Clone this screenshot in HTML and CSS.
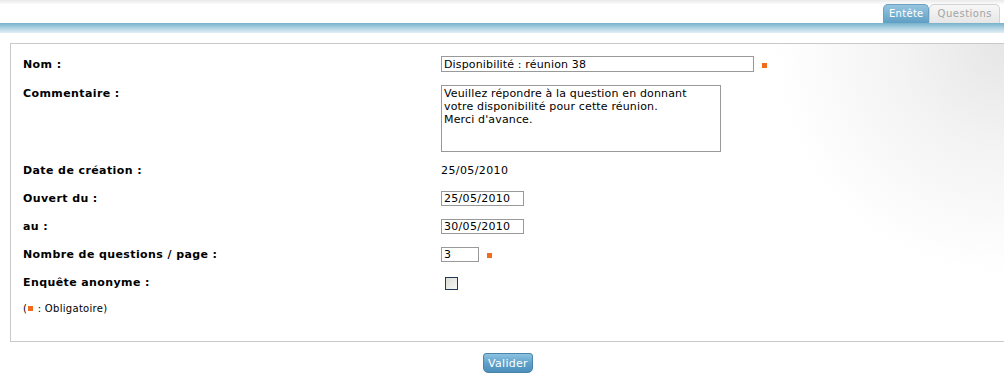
FILE: index.html
```html
<!DOCTYPE html>
<html lang="fr">
<head>
  <meta charset="UTF-8">
  <title>Enquête - Entête</title>
  <link rel="stylesheet" href="styles.css">
</head>
<body>
<div class="top-strip"></div>
<div class="tab-bar">
  <a class="tab active" href="#">Entête</a>
  <a class="tab" href="#">Questions</a>
</div>
<div class="blue-bar"></div>

<div class="page">
  <form class="survey-box">
    <div class="row row-first">
      <label class="lbl">Nom :</label>
      <input class="field field-name" type="text" value="Disponibilité : réunion 38">
      <span class="req"></span>
    </div>
    <div class="row row-top">
      <label class="lbl">Commentaire :</label>
      <textarea class="field field-comment">Veuillez répondre à la question en donnant
votre disponibilité pour cette réunion.
Merci d'avance.</textarea>
    </div>
    <div class="row row-date">
      <label class="lbl">Date de création :</label>
      <span class="value">25/05/2010</span>
    </div>
    <div class="row">
      <label class="lbl">Ouvert du :</label>
      <input class="field field-date" type="text" value="25/05/2010">
    </div>
    <div class="row">
      <label class="lbl">au :</label>
      <input class="field field-date" type="text" value="30/05/2010">
    </div>
    <div class="row">
      <label class="lbl">Nombre de questions / page :</label>
      <input class="field field-num" type="text" value="3">
      <span class="req"></span>
    </div>
    <div class="row">
      <label class="lbl">Enquête anonyme :</label>
      <input class="check" type="checkbox">
    </div>
    <div class="row row-note">
      <span class="note">(<span class="req req-inline"></span> : Obligatoire)</span>
    </div>
  </form>
  <div class="actions">
    <button class="btn" type="button">Valider</button>
  </div>
</div>
</body>
</html>
```

FILE: styles.css
```css
body {
  margin: 0;
  background: #fff;
  color: #000;
  font-family: "DejaVu Sans", Verdana, sans-serif;
  font-size: 11px;
  overflow: hidden;
}
.top-strip {
  height: 4px;
  background: linear-gradient(#e9e9e9, #fbfbfb);
}
.tab-bar {
  height: 19px;
  display: flex;
  justify-content: flex-end;
  align-items: flex-end;
  padding-right: 4px;
}
.tab {
  display: block;
  box-sizing: border-box;
  height: 19px;
  line-height: 18px;
  font-size: 10px;
  letter-spacing: 0.3px;
  text-decoration: none;
  border-radius: 5px 5px 0 0;
}
.tab.active {
  color: #fff;
  background: linear-gradient(#96c6e0, #5f9ec4);
  border: 1px solid #6c9fc0;
  border-bottom: none;
  padding: 0 4px 0 5px;
}
.tab:not(.active) {
  color: #a3a3a3;
  background: linear-gradient(#f7f7f7, #e6e6e6);
  border: 1px solid #d2d2d2;
  border-bottom: none;
  padding: 0 7px 0 8px;
  letter-spacing: 0.5px;
}
.blue-bar {
  height: 10px;
  background: linear-gradient(#76b1cc, #a9cfe1 45%, #e2eff6);
}
.page {
  margin: 10px 0 0 10px;
  width: 996px;
}
.survey-box {
  display: block;
  border: 1px solid #c9c9c9;
  padding: 6px 0 21px 12px;
  margin: 0;
  background: radial-gradient(circle 230px at 100% 0, #e6e6e6, #f3f3f3 45%, rgba(255,255,255,0) 100%) no-repeat, #fff;
}
.row {
  display: flex;
  align-items: center;
  height: 28px;
}
.row-top {
  align-items: flex-start;
  height: auto;
  margin-top: 7px;
}
.row-date {
  margin-top: 4px;
}
.row-note {
  height: 24px;
}
.lbl {
  width: 418px;
  flex: none;
  font-weight: bold;
  line-height: 16px;
  padding-top: 1px;
  letter-spacing: 0.4px;
}
.value {
  line-height: 16px;
  padding-top: 1px;
  letter-spacing: 0.4px;
}
.field {
  box-sizing: border-box;
  margin: 0;
  border: 1px solid #999;
  font-family: "DejaVu Sans", Verdana, sans-serif;
  font-size: 11px;
  letter-spacing: 0.15px;
  color: #000;
  padding: 0 2px;
  background: #fff;
  outline: none;
}
.field-name {
  width: 313px;
  height: 16px;
}
.field-comment {
  width: 280px;
  height: 67px;
  resize: none;
  line-height: 13px;
  padding: 1px 2px;
  overflow: hidden;
}
.field-date {
  width: 83px;
  height: 15px;
  letter-spacing: 0.3px;
}
.field-num {
  width: 38px;
  height: 15px;
}
.req {
  display: inline-block;
  width: 5px;
  height: 5px;
  background: #f26a1c;
  margin: 3px 0 0 8px;
}
.req-inline {
  margin: 0 1px 1px 1px;
  vertical-align: middle;
}
.check {
  appearance: none;
  box-sizing: border-box;
  width: 13px;
  height: 13px;
  margin: 3px 0 0 4px;
  border: 1px solid #1d3b57;
  background: linear-gradient(135deg, #dcdcd6, #f6f6f3);
}
.note {
  font-size: 10px;
  letter-spacing: 0.3px;
}
.actions {
  display: flex;
  justify-content: center;
  margin-top: 11px;
}
.btn {
  box-sizing: border-box;
  width: 50px;
  height: 20px;
  padding: 0;
  font-family: "DejaVu Sans", Verdana, sans-serif;
  font-size: 11px;
  letter-spacing: 0.3px;
  color: #fff;
  background: linear-gradient(#8cc3e0, #5d9fc9 55%, #4c8fbc);
  border: 1px solid #4a84aa;
  border-radius: 3px 3px 5px 5px;
  cursor: pointer;
}
```
